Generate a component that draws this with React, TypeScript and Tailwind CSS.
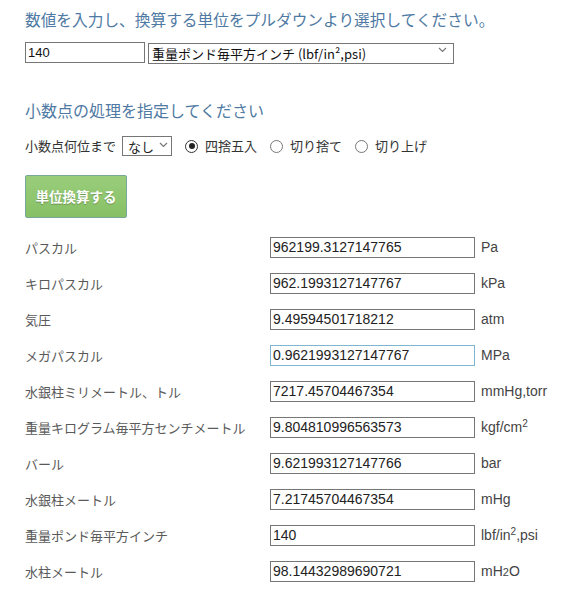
import React from "react";

const JP = "font-['Meiryo','Noto_Sans_CJK_JP',sans-serif]";
const AR = "font-['Liberation_Sans','Noto_Sans_CJK_JP',sans-serif]";

const Sup = ({ children }: { children: React.ReactNode }) => (
  <span className="text-[10px] relative -top-[5px]">{children}</span>
);

const ROWS: { label: string; value: string; unit: React.ReactNode; focus?: boolean }[] = [
  { label: "パスカル", value: "962199.3127147765", unit: "Pa" },
  { label: "キロパスカル", value: "962.1993127147767", unit: "kPa" },
  { label: "気圧", value: "9.49594501718212", unit: "atm" },
  { label: "メガパスカル", value: "0.9621993127147767", unit: "MPa", focus: true },
  { label: "水銀柱ミリメートル、トル", value: "7217.45704467354", unit: "mmHg,torr" },
  {
    label: "重量キログラム毎平方センチメートル",
    value: "9.804810996563573",
    unit: (
      <>
        kgf/cm<Sup>2</Sup>
      </>
    ),
  },
  { label: "バール", value: "9.621993127147766", unit: "bar" },
  { label: "水銀柱メートル", value: "7.21745704467354", unit: "mHg" },
  {
    label: "重量ポンド毎平方インチ",
    value: "140",
    unit: (
      <>
        lbf/in<Sup>2</Sup>,psi
      </>
    ),
  },
  {
    label: "水柱メートル",
    value: "98.14432989690721",
    unit: (
      <>
        mH<span className="text-[11px]">2</span>O
      </>
    ),
  },
];

function Chevron() {
  return (
    <svg width="9" height="6" viewBox="0 0 9 6" className="text-[#777]">
      <path d="M1 1l3.5 3.5L8 1" fill="none" stroke="currentColor" strokeWidth="1.2" />
    </svg>
  );
}

function Radio({ checked, label }: { checked?: boolean; label: string }) {
  return (
    <label className="flex items-center gap-[7px]">
      <span
        className={`w-[13px] h-[13px] rounded-full border flex items-center justify-center ${
          checked ? "border-[#333]" : "border-[#777]"
        }`}
      >
        {checked && <span className="w-[6px] h-[6px] rounded-full bg-[#222]" />}
      </span>
      <span>{label}</span>
    </label>
  );
}

export default function App() {
  return (
    <div className={`w-[561px] h-[605px] bg-white px-[25px] pt-[8px] ${JP}`}>
      <h2 className="h-6 leading-6 text-[15.7px] text-[#4f7aa3] whitespace-nowrap">
        数値を入力し、換算する単位をプルダウンより選択してください。
      </h2>

      <div className="mt-[8px] flex items-center gap-[3px]">
        <input
          defaultValue="140"
          className={`shrink-0 w-[120px] h-[21px] border border-[#767676] px-[2px] text-[13px] text-[#111] outline-none ${AR}`}
        />
        <div className="relative shrink-0">
          <select
            defaultValue="psi"
            className={`appearance-none w-[306px] h-[21px] border border-[#767676] pl-[3px] text-[13px] text-[#111] bg-white outline-none ${JP}`}
          >
            <option value="psi">重量ポンド毎平方インチ (lbf/in²,psi)</option>
          </select>
          <span className="pointer-events-none absolute right-[7px] top-[7px]">
            <Chevron />
          </span>
        </div>
      </div>

      <h2 className="mt-[34px] h-6 leading-6 text-[16px] text-[#4f7aa3]">
        小数点の処理を指定してください
      </h2>

      <div className="mt-[13px] h-[22px] flex items-center text-[13px] text-[#333]">
        <span>小数点何位まで</span>
        <div className="relative ml-[6px]">
          <select
            defaultValue="none"
            className={`appearance-none w-[50px] h-[20px] border border-[#767676] pl-[5px] text-[13px] text-[#222] bg-white outline-none ${JP}`}
          >
            <option value="none">なし</option>
          </select>
          <span className="pointer-events-none absolute right-[4px] top-[6px]">
            <Chevron />
          </span>
        </div>
        <div className="ml-[13px] flex items-center gap-[13px]">
          <Radio checked label="四捨五入" />
          <Radio label="切り捨て" />
          <Radio label="切り上げ" />
        </div>
      </div>

      <button className="mt-[18px] block w-[102px] h-[43px] rounded-[2px] border border-[#7aa896] bg-gradient-to-b from-[#9acd7b] to-[#86c065] text-white text-[13.5px] font-bold [text-shadow:0_1px_1px_rgba(0,0,0,0.25)]">
        単位換算する
      </button>

      <div className="mt-[19px] flex flex-col gap-[15px]">
        {ROWS.map((r) => (
          <div key={r.label} className="flex items-center h-[21px]">
            <span className="shrink-0 w-[245px] text-[13px] text-[#5a5a5a] whitespace-nowrap">{r.label}</span>
            <input
              readOnly
              value={r.value}
              className={`shrink-0 w-[205px] h-[21px] border px-[2px] text-[14px] text-[#222] outline-none ${AR} ${
                r.focus ? "border-[#7db6d1]" : "border-[#767676]"
              }`}
            />
            <span className={`ml-[6px] text-[14px] text-[#444] whitespace-nowrap ${AR}`}>{r.unit}</span>
          </div>
        ))}
      </div>
    </div>
  );
}
